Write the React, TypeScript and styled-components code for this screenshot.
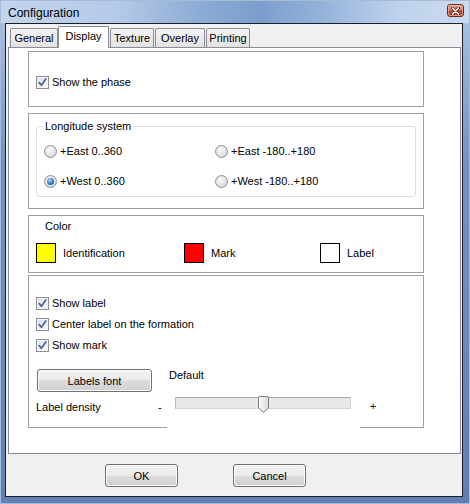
import React from "react";
import styled, { createGlobalStyle } from "styled-components";

const GlobalStyle = createGlobalStyle`
  html, body { margin: 0; padding: 0; background: #fff; }
  body { font-family: "Liberation Sans", Arial, sans-serif; font-size: 11px; color: #000; }
  * { box-sizing: border-box; }
`;

const Window = styled.div`
  width: 470px;
  height: 504px;
  display: flex;
  flex-direction: column;
  border: 1px solid #a7bad6;
  background: linear-gradient(180deg, #b4c9e6 0px, #9fb8dc 40px, #7393c2 160px, #5f80b0 100%);
`;

const TitleBar = styled.div`
  height: 22px;
  flex-shrink: 0;
  display: flex;
  align-items: center;
  justify-content: space-between;
  padding: 2px 5px 0 7px;
  background: linear-gradient(
    90deg,
    #c3d5ec 0%,
    #b4cae7 25%,
    #8eacd6 42%,
    #7c9dcc 55%,
    #94b1da 68%,
    #bfd2ec 85%,
    #cbdbef 100%
  );
`;

const Title = styled.span`
  font-size: 12px;
  line-height: 14px;
  color: #000;
`;

const CloseButton = styled.div`
  width: 17px;
  height: 13px;
  margin-top: -5px;
  border: 1px solid #6a2a20;
  border-radius: 3px;
  display: flex;
  align-items: center;
  justify-content: center;
  background: linear-gradient(180deg, #e9a898 0%, #d2735f 45%, #b4412b 55%, #c9604a 100%);
  box-shadow: inset 0 0 0 1px rgba(255, 220, 210, 0.45);
`;

const Client = styled.div`
  flex: 1;
  margin: 0 6px 6px 4px;
  border: 1px solid #18202c;
  background: #f0f0f0;
  display: flex;
  flex-direction: column;
`;

const TabStrip = styled.div`
  display: flex;
  align-items: flex-end;
  padding: 2px 0 0 4px;
  height: 23px;
  flex-shrink: 0;
`;

const Tab = styled.div<{ $w: number; $active?: boolean }>`
  width: ${(p) => p.$w}px;
  height: ${(p) => (p.$active ? 22 : 19)}px;
  margin: 0 1px ${(p) => (p.$active ? -1 : 0)}px ${(p) => (p.$active ? -1 : 0)}px;
  border: 1px solid #898c95;
  border-bottom: none;
  border-radius: 2px 2px 0 0;
  position: relative;
  z-index: ${(p) => (p.$active ? 1 : 0)};
  background: ${(p) => (p.$active ? "#fff" : "linear-gradient(180deg, #f3f3f3 0%, #ebebeb 50%, #e2e2e2 100%)")};
  display: flex;
  align-items: center;
  justify-content: center;
  padding-bottom: ${(p) => (p.$active ? 3 : 0)}px;
  line-height: 13px;
`;

const TabPanel = styled.div`
  height: 407px;
  flex-shrink: 0;
  margin: 0 1px 0 2px;
  border: 1px solid #898c95;
  background: #fff;
  display: flex;
  flex-direction: column;
  padding: 0 0 0 19px;
`;

const GroupBox = styled.div<{ $h: number; $mt: number }>`
  width: 396px;
  height: ${(p) => p.$h}px;
  margin-top: ${(p) => p.$mt}px;
  flex-shrink: 0;
  border: 1px solid #a0a0a0;
`;

const PhaseBox = styled(GroupBox)`
  padding: 24px 0 0 7px;
`;

const CheckRow = styled.label`
  display: flex;
  align-items: center;
  gap: 3px;
  height: 13px;
  line-height: 13px;
  white-space: nowrap;
`;

const CheckBox = styled.span`
  width: 13px;
  height: 13px;
  flex-shrink: 0;
  border: 1px solid #8e8f8f;
  background: linear-gradient(135deg, #d9dde3 0%, #eef0f3 60%, #fbfbfc 100%);
  box-shadow: inset 0 0 0 1px #f6f6f6;
  display: flex;
  align-items: center;
  justify-content: center;
`;

const LongitudeBox = styled(GroupBox)`
  padding: 6px 7px 0 7px;
`;

const FieldSet = styled.fieldset`
  margin: 0;
  padding: 3px 0 0 7px;
  border: 1px solid #d5dfe5;
  border-radius: 3px;
  min-width: 0;
`;

const Legend = styled.legend`
  margin-left: -1px;
  padding: 0 2px;
  line-height: 13px;
  font-size: 11px;
`;

const RadioGrid = styled.div`
  display: grid;
  grid-template-columns: 171px auto;
  grid-auto-rows: 30px;
  align-items: center;
`;

const RadioItem = styled.label`
  display: flex;
  align-items: center;
  gap: 3px;
  line-height: 13px;
  white-space: nowrap;
`;

const Radio = styled.span<{ $on?: boolean }>`
  width: 13px;
  height: 13px;
  flex-shrink: 0;
  border-radius: 50%;
  border: 1px solid #8e8f8f;
  background: radial-gradient(circle at 40% 35%, #fbfbfb 0%, #e6e6e6 45%, #cfcfcf 100%);
  display: flex;
  align-items: center;
  justify-content: center;
  &::after {
    content: "";
    display: ${(p) => (p.$on ? "block" : "none")};
    width: 7px;
    height: 7px;
    border-radius: 50%;
    background: radial-gradient(circle at 40% 35%, #b6e2fb 0%, #3a8ad0 45%, #0d3f7e 100%);
  }
`;

const ColorBox = styled(GroupBox)`
  padding: 4px 0 0 7px;
`;

const ColorTitle = styled.div`
  padding-left: 9px;
  line-height: 13px;
`;

const ColorRow = styled.div`
  display: grid;
  grid-template-columns: 148px 136px auto;
  margin-top: 10px;
`;

const ColorItem = styled.div`
  display: flex;
  align-items: center;
  gap: 7px;
  line-height: 13px;
`;

const Swatch = styled.span<{ $c: string }>`
  width: 20px;
  height: 20px;
  border: 1px solid #000;
  background: ${(p) => p.$c};
`;

const LabelBox = styled(GroupBox)`
  padding: 21px 0 0 7px;
`;

const CheckList = styled.div`
  display: flex;
  flex-direction: column;
  gap: 8px;
`;

const ControlGrid = styled.div`
  display: grid;
  grid-template-columns: 122px 9px 193px auto;
  grid-template-rows: 23px 38px;
  margin-top: 17px;
`;

const Button = styled.button<{ $w: number }>`
  width: ${(p) => p.$w}px;
  height: 23px;
  padding: 0;
  border: 1px solid #707070;
  border-radius: 3px;
  background: linear-gradient(180deg, #f2f2f2 0%, #ebebeb 50%, #dddddd 50%, #cfcfcf 100%);
  box-shadow: inset 0 0 0 1px #fcfcfc;
  font-family: "Liberation Sans", Arial, sans-serif;
  font-size: 11px;
  color: #000;
`;

const FontButton = styled(Button)`
  margin-left: 1px;
`;

const CellText = styled.span<{ $mt?: number; $pl?: number }>`
  align-self: start;
  margin-top: ${(p) => p.$mt ?? 0}px;
  padding-left: ${(p) => p.$pl ?? 0}px;
  line-height: 13px;
  white-space: nowrap;
`;

const SliderCell = styled.div`
  background: #fff;
  height: 38px;
  padding: 5px 9px 0 8px;
`;

const Track = styled.div`
  position: relative;
  height: 12px;
  border: 1px solid #d4d6d6;
  border-top-color: #a8a8a8;
  border-left-color: #b8b8b8;
  background: #e7e9e9;
`;

const Thumb = styled.svg`
  position: absolute;
  left: 82px;
  top: -2px;
`;

const Footer = styled.div`
  display: flex;
  gap: 55px;
  padding: 10px 0 0 99px;
`;

const Check = () => (
  <CheckBox>
    <svg width="11" height="11" viewBox="0 0 11 11">
      <path d="M2.2 5.6 L4.4 8.3 L8.8 2" fill="none" stroke="#4764a0" strokeWidth="1.7" strokeLinecap="round" strokeLinejoin="round" />
    </svg>
  </CheckBox>
);

export default function App() {
  return (
    <>
      <GlobalStyle />
      <Window>
        <TitleBar>
          <Title>Configuration</Title>
          <CloseButton>
            <svg width="9" height="8" viewBox="0 0 9 8">
              <path d="M1.5 1 L7.5 7 M7.5 1 L1.5 7" stroke="#5a1d14" strokeWidth="3" strokeLinecap="round" />
              <path d="M1.5 1 L7.5 7 M7.5 1 L1.5 7" stroke="#fff" strokeWidth="1.6" strokeLinecap="round" />
            </svg>
          </CloseButton>
        </TitleBar>
        <Client>
          <TabStrip>
            <Tab $w={48}>General</Tab>
            <Tab $w={51} $active>Display</Tab>
            <Tab $w={44}>Texture</Tab>
            <Tab $w={50}>Overlay</Tab>
            <Tab $w={44}>Printing</Tab>
          </TabStrip>
          <TabPanel>
            <PhaseBox $h={56} $mt={3}>
              <CheckRow>
                <Check />
                Show the phase
              </CheckRow>
            </PhaseBox>

            <LongitudeBox $h={96} $mt={6}>
              <FieldSet>
                <Legend>Longitude system</Legend>
                <RadioGrid>
                  <RadioItem>
                    <Radio />
                    +East 0..360
                  </RadioItem>
                  <RadioItem>
                    <Radio />
                    +East -180..+180
                  </RadioItem>
                  <RadioItem>
                    <Radio $on />
                    +West 0..360
                  </RadioItem>
                  <RadioItem>
                    <Radio />
                    +West -180..+180
                  </RadioItem>
                </RadioGrid>
              </FieldSet>
            </LongitudeBox>

            <ColorBox $h={58} $mt={6}>
              <ColorTitle>Color</ColorTitle>
              <ColorRow>
                <ColorItem>
                  <Swatch $c="#ffff00" />
                  Identification
                </ColorItem>
                <ColorItem>
                  <Swatch $c="#ff0000" />
                  Mark
                </ColorItem>
                <ColorItem>
                  <Swatch $c="#ffffff" />
                  Label
                </ColorItem>
              </ColorRow>
            </ColorBox>

            <LabelBox $h={153} $mt={2}>
              <CheckList>
                <CheckRow>
                  <Check />
                  Show label
                </CheckRow>
                <CheckRow>
                  <Check />
                  Center label on the formation
                </CheckRow>
                <CheckRow>
                  <Check />
                  Show mark
                </CheckRow>
              </CheckList>
              <ControlGrid>
                <FontButton $w={115}>Labels font</FontButton>
                <span />
                <CellText $pl={2}>Default</CellText>
                <span />
                <CellText $mt={9}>Label density</CellText>
                <CellText $mt={9}>-</CellText>
                <SliderCell>
                  <Track>
                    <Thumb width="11" height="17" viewBox="0 0 11 17">
                      <defs>
                        <linearGradient id="thumbGrad" x1="0" y1="0" x2="1" y2="0">
                          <stop offset="0" stopColor="#fbfbfb" />
                          <stop offset="1" stopColor="#d9d9d9" />
                        </linearGradient>
                      </defs>
                      <path
                        d="M0.5 2 Q0.5 0.5 2 0.5 H9 Q10.5 0.5 10.5 2 V12 L5.5 16.3 L0.5 12 Z"
                        fill="url(#thumbGrad)"
                        stroke="#7d7d7d"
                      />
                    </Thumb>
                  </Track>
                </SliderCell>
                <CellText $mt={8} $pl={10}>+</CellText>
              </ControlGrid>
            </LabelBox>
          </TabPanel>
          <Footer>
            <Button $w={73}>OK</Button>
            <Button $w={73}>Cancel</Button>
          </Footer>
        </Client>
      </Window>
    </>
  );
}
